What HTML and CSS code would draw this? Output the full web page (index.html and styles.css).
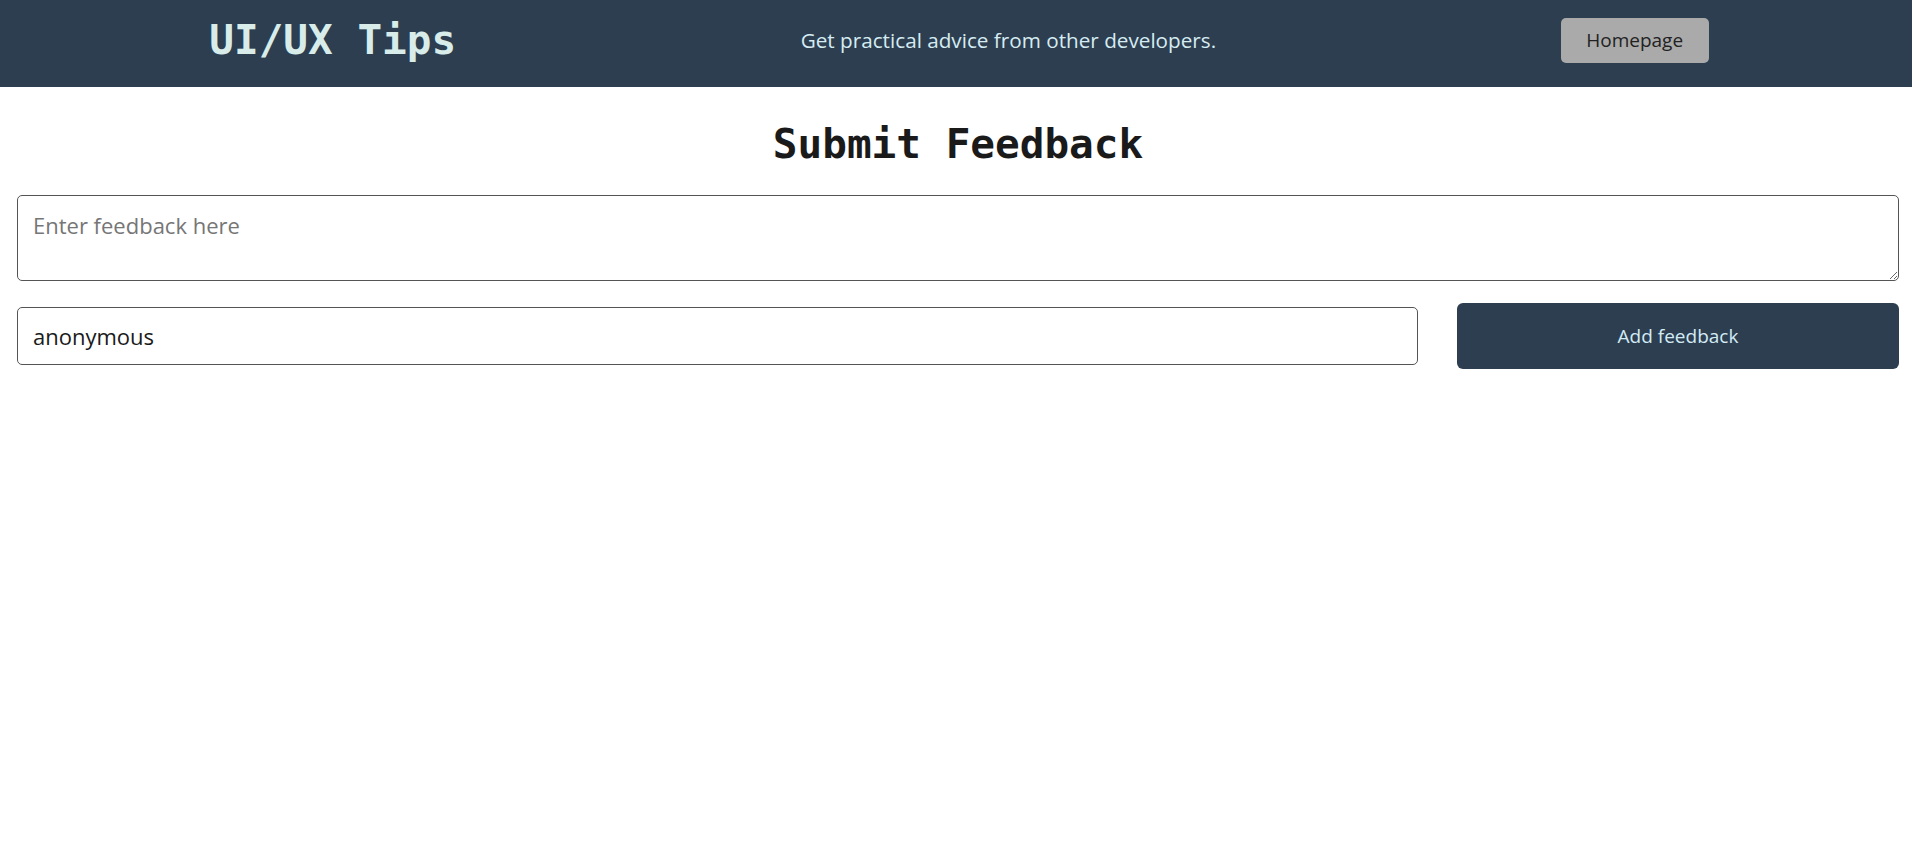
FILE: index.html
```html
<!DOCTYPE html>
<html lang="en">
<head>
<meta charset="utf-8">
<title>UI/UX Tips</title>
<link rel="stylesheet" href="styles.css">
</head>
<body>
<header class="site-header">
  <div class="brand">UI/UX Tips</div>
  <p class="tagline">Get practical advice from other developers.</p>
  <button class="home-btn" type="button">Homepage</button>
</header>
<main class="main">
  <h1 class="page-title">Submit Feedback</h1>
  <form class="feedback-form">
    <textarea class="feedback-text" rows="2" placeholder="Enter feedback here"></textarea>
    <div class="form-row">
      <input class="name-input" type="text" value="anonymous">
      <button class="submit-btn" type="button">Add feedback</button>
    </div>
  </form>
</main>
</body>
</html>
```

FILE: styles.css
```css
* { box-sizing: border-box; }
html, body { margin: 0; padding: 0; background: #fff; }
body { font-family: "Open Sans", "Noto Sans", sans-serif; color: #1a1a1a; }

.site-header {
  height: 87px;
  background: #2c3e50;
  display: flex;
  align-items: center;
  justify-content: space-around;
  padding: 0 31px 7px 37px;
}
.brand {
  font-family: "DejaVu Sans Mono", monospace;
  font-weight: bold;
  font-size: 41px;
  color: #d8ecea;
}
.tagline {
  margin: 0;
  font-size: 20.7px;
  color: #d6ecf2;
}
.home-btn {
  width: 148px;
  height: 45px;
  border: none;
  border-radius: 5px;
  background: #aaaaaa;
  color: #222;
  font-family: inherit;
  font-size: 19px;
  cursor: pointer;
}

.main { padding: 0 13px 0 17px; }
.page-title {
  margin: 33px 0 27px;
  text-align: center;
  font-family: "DejaVu Sans Mono", monospace;
  font-weight: bold;
  font-size: 41px;
  color: #1a1a1a;
}
.feedback-form { display: flex; flex-direction: column; gap: 22px; }
.feedback-text {
  display: block;
  width: 100%;
  height: 86px;
  padding: 13px 15px 9px;
  border: 1px solid #555;
  border-radius: 5px;
  font-family: inherit;
  font-size: 22px;
  line-height: 32px;
  color: #222;
}
.feedback-text::placeholder { color: #767676; }
.form-row {
  display: grid;
  grid-template-columns: 1fr 442px;
  gap: 39px;
  align-items: center;
}
.name-input {
  height: 58px;
  padding: 12px 15px;
  border: 1px solid #555;
  border-radius: 5px;
  font-family: inherit;
  font-size: 22px;
  color: #1a1a1a;
}
.submit-btn {
  height: 66px;
  border: none;
  border-radius: 6px;
  background: #2c3e50;
  color: #d3ebf5;
  font-family: inherit;
  font-size: 19px;
  cursor: pointer;
}
```
